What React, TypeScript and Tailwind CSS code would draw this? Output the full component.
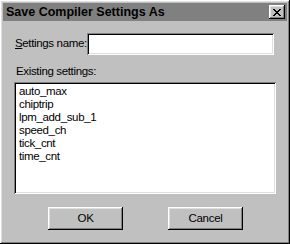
const raised =
  'shadow-[inset_-1px_-1px_#000,inset_1px_1px_#fff,inset_-2px_-2px_#808080,inset_2px_2px_#dfdfdf]'
const sunken =
  'shadow-[inset_1px_1px_#808080,inset_-1px_-1px_#fff,inset_2px_2px_#000,inset_-2px_-2px_#dfdfdf]'

const settings = ['auto_max', 'chiptrip', 'lpm_add_sub_1', 'speed_ch', 'tick_cnt', 'time_cnt']

const Button = ({ label }: { label: string }) => (
  <button className={`w-[75px] h-[23px] bg-[#c0c0c0] text-[11.5px] tracking-[-0.3px] text-black ${raised}`}>
    {label}
  </button>
)

export default function App() {
  return (
    <div
      className={`w-[290px] h-[244px] bg-[#c0c0c0] p-[3px] flex flex-col ${raised}`}
      style={{ fontFamily: '"Liberation Sans", Arial, sans-serif' }}
    >
      {/* Title bar */}
      <div className="h-[18px] bg-[#808080] flex items-center justify-between pl-[3px] pr-[2px]">
        <span className="text-[12.5px] font-bold text-black whitespace-nowrap">
          Save Compiler Settings As
        </span>
        <div className={`w-[16px] h-[14px] bg-[#c0c0c0] flex items-center justify-center ${raised}`}>
          <svg width="8" height="7" viewBox="0 0 8 7">
            <path d="M0 0h2v1h1v1h2V1h1V0h2v1H7v1H6v1H5v1h1v1h1v1h1v1H6V6H5V5H3v1H2v1H0V6h1V5h1V4h1V3H2V2H1V1H0z" fill="#000" />
          </svg>
        </div>
      </div>

      {/* Body */}
      <div className="flex flex-col pl-[11px] pr-[9px] pt-[12px] text-[11.5px] tracking-[-0.35px] text-black">
        <div className="flex items-center justify-between">
          <label className="pl-[1px] whitespace-nowrap">
            <span className="underline">S</span>ettings name:
          </label>
          <div className={`w-[187px] h-[22px] bg-white mr-[5px] shrink-0 ${sunken}`} />
        </div>

        <div className="mt-[10px] pl-[2px] leading-[13px]">Existing settings:</div>

        <div className={`mt-[4px] w-[262px] h-[112px] bg-white pt-[3px] pl-[5px] ${sunken}`}>
          {settings.map((s) => (
            <div key={s} className="leading-[13px]">
              {s}
            </div>
          ))}
        </div>

        <div className="flex mt-[13px] pl-[34px] gap-[45px]">
          <Button label="OK" />
          <Button label="Cancel" />
        </div>
      </div>
    </div>
  )
}
